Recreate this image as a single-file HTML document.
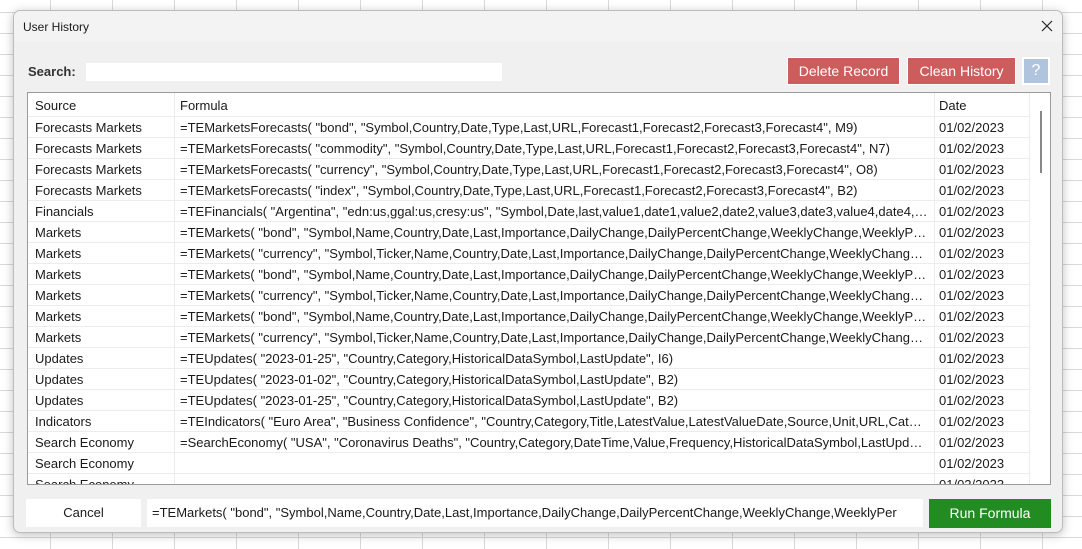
<!DOCTYPE html>
<html><head><meta charset="utf-8"><style>
*{box-sizing:border-box;margin:0;padding:0}
body{width:1082px;height:549px;overflow:hidden;position:relative;font-family:"Liberation Sans",sans-serif;font-size:13px;color:#1a1a1a;
background-color:#fff;
background-image:linear-gradient(to right,#d9d9d9 1px,transparent 1px),linear-gradient(to bottom,#d9d9d9 1px,transparent 1px);
background-size:62px 21px;background-position:50px 12px;}
.dlg{position:absolute;left:13px;top:10px;width:1050px;height:523px;background:#f0f0f0;border:1px solid #bcbcbc;border-radius:7px;box-shadow:0 2px 10px rgba(0,0,0,.25);overflow:hidden}
.title{position:absolute;left:0;top:0;width:100%;height:31px;background:#f3f3f3;font-size:12px;padding:9px 0 0 9px}
.x{position:absolute;right:9px;top:9px}
.a{position:absolute}
.btn{position:absolute;color:#fff;font-size:14px;text-align:center;line-height:27px}
.tbl{position:absolute;left:13px;top:81px;width:1024px;height:393px;background:#fff;border:1px solid #9a9a9a;overflow:hidden}
.row{position:absolute;left:0;height:21px;width:1001px;border-bottom:1px solid #ececec;white-space:nowrap}
.row span{position:absolute;top:3px;overflow:hidden;text-overflow:ellipsis}
.c1{left:7px;width:140px}.c2{left:152px;width:748px}.c3{left:911px}
.vl{position:absolute;top:0;height:100%;border-left:1px solid #ececec}
</style></head><body>
<div class="dlg">
<div class="title">User History<svg class="x" width="12" height="12" viewBox="0 0 12 12"><path d="M1 1L11 11M11 1L1 11" stroke="#222" stroke-width="1.2"/></svg></div>
<div class="a" style="left:14px;top:53px;font-size:13px;font-weight:bold;color:#333">Search:</div>
<div class="a" style="left:72px;top:52px;width:416px;height:18px;background:#fff"></div>
<div class="btn" style="left:773px;top:46px;width:113px;height:28px;background:#cd5c5c;border:1px solid #fff">Delete Record</div>
<div class="btn" style="left:893px;top:46px;width:109px;height:28px;background:#cd5c5c;border:1px solid #fff">Clean History</div>
<div class="btn" style="left:1008px;top:46px;width:28px;height:28px;background:#b0c4de;border:2px solid #fff;font-size:16px;line-height:24px">?</div>
<div class="tbl">
<div class="vl" style="left:146px"></div><div class="vl" style="left:906px"></div><div class="vl" style="left:1001px"></div>
<div class="row" style="top:0;height:24px"><span class="c1" style="top:5px">Source</span><span class="c2" style="top:5px">Formula</span><span class="c3" style="top:5px">Date</span></div>
<div class="row" style="top:24px"><span class="c1">Forecasts Markets</span><span class="c2">=TEMarketsForecasts( "bond", "Symbol,Country,Date,Type,Last,URL,Forecast1,Forecast2,Forecast3,Forecast4", M9)</span><span class="c3">01/02/2023</span></div>
<div class="row" style="top:45px"><span class="c1">Forecasts Markets</span><span class="c2">=TEMarketsForecasts( "commodity", "Symbol,Country,Date,Type,Last,URL,Forecast1,Forecast2,Forecast3,Forecast4", N7)</span><span class="c3">01/02/2023</span></div>
<div class="row" style="top:66px"><span class="c1">Forecasts Markets</span><span class="c2">=TEMarketsForecasts( "currency", "Symbol,Country,Date,Type,Last,URL,Forecast1,Forecast2,Forecast3,Forecast4", O8)</span><span class="c3">01/02/2023</span></div>
<div class="row" style="top:87px"><span class="c1">Forecasts Markets</span><span class="c2">=TEMarketsForecasts( "index", "Symbol,Country,Date,Type,Last,URL,Forecast1,Forecast2,Forecast3,Forecast4", B2)</span><span class="c3">01/02/2023</span></div>
<div class="row" style="top:108px"><span class="c1">Financials</span><span class="c2">=TEFinancials( "Argentina", "edn:us,ggal:us,cresy:us", "Symbol,Date,last,value1,date1,value2,date2,value3,date3,value4,date4,value5,date5", A1)</span><span class="c3">01/02/2023</span></div>
<div class="row" style="top:129px"><span class="c1">Markets</span><span class="c2">=TEMarkets( "bond", "Symbol,Name,Country,Date,Last,Importance,DailyChange,DailyPercentChange,WeeklyChange,WeeklyPercentChange", B2)</span><span class="c3">01/02/2023</span></div>
<div class="row" style="top:150px"><span class="c1">Markets</span><span class="c2">=TEMarkets( "currency", "Symbol,Ticker,Name,Country,Date,Last,Importance,DailyChange,DailyPercentChange,WeeklyChange,WeeklyPercentChange", B2)</span><span class="c3">01/02/2023</span></div>
<div class="row" style="top:171px"><span class="c1">Markets</span><span class="c2">=TEMarkets( "bond", "Symbol,Name,Country,Date,Last,Importance,DailyChange,DailyPercentChange,WeeklyChange,WeeklyPercentChange", B2)</span><span class="c3">01/02/2023</span></div>
<div class="row" style="top:192px"><span class="c1">Markets</span><span class="c2">=TEMarkets( "currency", "Symbol,Ticker,Name,Country,Date,Last,Importance,DailyChange,DailyPercentChange,WeeklyChange,WeeklyPercentChange", B2)</span><span class="c3">01/02/2023</span></div>
<div class="row" style="top:213px"><span class="c1">Markets</span><span class="c2">=TEMarkets( "bond", "Symbol,Name,Country,Date,Last,Importance,DailyChange,DailyPercentChange,WeeklyChange,WeeklyPercentChange", B2)</span><span class="c3">01/02/2023</span></div>
<div class="row" style="top:234px"><span class="c1">Markets</span><span class="c2">=TEMarkets( "currency", "Symbol,Ticker,Name,Country,Date,Last,Importance,DailyChange,DailyPercentChange,WeeklyChange,WeeklyPercentChange", B2)</span><span class="c3">01/02/2023</span></div>
<div class="row" style="top:255px"><span class="c1">Updates</span><span class="c2">=TEUpdates( "2023-01-25", "Country,Category,HistoricalDataSymbol,LastUpdate", I6)</span><span class="c3">01/02/2023</span></div>
<div class="row" style="top:276px"><span class="c1">Updates</span><span class="c2">=TEUpdates( "2023-01-02", "Country,Category,HistoricalDataSymbol,LastUpdate", B2)</span><span class="c3">01/02/2023</span></div>
<div class="row" style="top:297px"><span class="c1">Updates</span><span class="c2">=TEUpdates( "2023-01-25", "Country,Category,HistoricalDataSymbol,LastUpdate", B2)</span><span class="c3">01/02/2023</span></div>
<div class="row" style="top:318px"><span class="c1">Indicators</span><span class="c2">=TEIndicators( "Euro Area", "Business Confidence", "Country,Category,Title,LatestValue,LatestValueDate,Source,Unit,URL,CategoryGroup", B2)</span><span class="c3">01/02/2023</span></div>
<div class="row" style="top:339px"><span class="c1">Search Economy</span><span class="c2">=SearchEconomy( "USA", "Coronavirus Deaths", "Country,Category,DateTime,Value,Frequency,HistoricalDataSymbol,LastUpdate", B2)</span><span class="c3">01/02/2023</span></div>
<div class="row" style="top:360px"><span class="c1">Search Economy</span><span class="c3">01/02/2023</span></div>
<div class="row" style="top:381px"><span class="c1">Search Economy</span><span class="c3">01/02/2023</span></div>
<div class="a" style="left:1012px;top:18px;width:2px;height:62px;background:#888"></div>
</div>
<div class="a" style="left:12px;top:488px;width:115px;height:28px;background:#fff;text-align:center;line-height:28px">Cancel</div>
<div class="a" style="left:133px;top:488px;width:776px;height:28px;background:#fff;line-height:28px;padding-left:5px;white-space:nowrap;overflow:hidden">=TEMarkets( "bond", "Symbol,Name,Country,Date,Last,Importance,DailyChange,DailyPercentChange,WeeklyChange,WeeklyPer</div>
<div class="btn" style="left:915px;top:488px;width:122px;height:29px;background:#228b22;line-height:29px">Run Formula</div>
</div>
</body></html>
